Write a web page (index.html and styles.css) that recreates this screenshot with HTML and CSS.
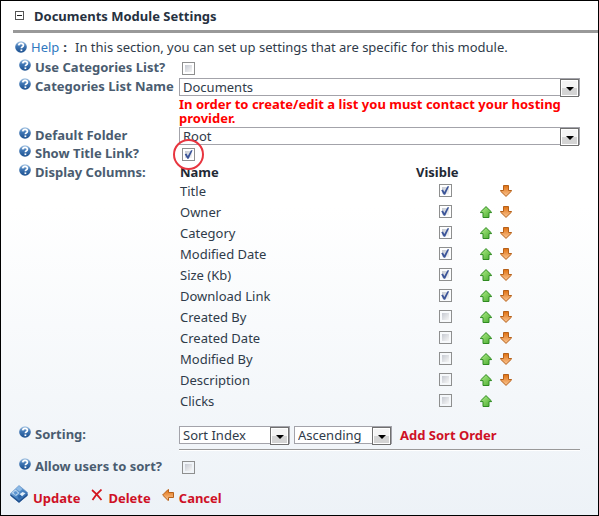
FILE: index.html
```html
<!DOCTYPE html>
<html lang="en">
<head>
<meta charset="utf-8">
<title>Documents Module Settings</title>
<link rel="stylesheet" href="styles.css">
</head>
<body>
<svg class="sprite" aria-hidden="true">
  <defs>
    <linearGradient id="blue" x1="0" y1="0" x2="0" y2="1"><stop offset="0" stop-color="#a9c8e6"/><stop offset=".45" stop-color="#3f76b4"/><stop offset="1" stop-color="#1b4f8e"/></linearGradient>
    <linearGradient id="green" x1="0" y1="0" x2="1" y2="1"><stop offset="0" stop-color="#b4f08c"/><stop offset="1" stop-color="#45a92c"/></linearGradient>
    <linearGradient id="orange" x1="0" y1="0" x2="0" y2="1"><stop offset="0" stop-color="#e0700f"/><stop offset="1" stop-color="#fbc897"/></linearGradient>
    <linearGradient id="disk" x1="0" y1="0" x2="1" y2="1"><stop offset="0" stop-color="#9cc4ea"/><stop offset=".5" stop-color="#4b86c4"/><stop offset="1" stop-color="#21569a"/></linearGradient>
    <symbol id="help" viewBox="0 0 12 12"><circle cx="6" cy="6" r="5.8" fill="url(#blue)"/><path d="M3.700 4.400Q4 2.400 6.100 2.400T8.400 4.200Q8.400 5.300 7.200 5.900Q6.400 6.300 6.400 7.300" fill="none" stroke="#fff" stroke-width="1.700"/><path d="M5.500 8.400h1.800v1.700H5.500z" fill="#fff"/></symbol>
    <symbol id="up" viewBox="0 0 12 12"><path d="M6 .6 11.500 6v.6H9v4.900H3V6.600H.5V6z" fill="url(#green)" stroke="#2f8a22"/></symbol>
    <symbol id="down" viewBox="0 0 12 12"><path d="M3.500.5h5v5h3v.6L6 11.400.5 6.100v-.6h3z" fill="url(#orange)" stroke="#b5601a"/></symbol>
    <symbol id="back" viewBox="0 0 12 12"><path d="M.6 6 6 .6h.5V3.500h5v5h-5v2.900H6z" fill="url(#orange)" stroke="#b5601a"/></symbol>
    <symbol id="cross" viewBox="0 0 12 12"><path d="M1 1Q6 5 10.500 11M10.500.5Q5 5 1.500 11" fill="none" stroke="#d3151e" stroke-width="1.700"/></symbol>
    <symbol id="save" viewBox="0 0 18 18"><path d="M9 .5 17.500 7.500v2.500L9 17.500.5 10.500V8.500z" fill="url(#disk)" stroke="#6f9acb" stroke-width=".7"/><path d="M.5 9 9 16l8.500-7v1.700L9 17.700.5 10.700z" fill="#1f4f8c"/><path d="M9 1 12.500 4 9.500 6.500 6 3.700z" fill="#8dbae6"/><path d="M5.500 4.500 9.500 8 6 11 1.500 7.800z" fill="#b9d4ee"/><path d="m3.500 7 2.500-1 2 2.200-3 1.800z" fill="#5a93cf"/><path d="m12.500 7 3 1.300-3.500 3L9.500 9.200z" fill="#e2effa"/><path d="m7.500 11 2.500-1.500 2 2L9 14z" fill="#2d66a8"/></symbol>
  </defs>
</svg>
<main class="panel">
  <header class="title">
    <button class="toggle" type="button" aria-label="Collapse"></button>
    <h1>Documents Module Settings</h1>
  </header>
  <form>
    <p class="intro"><svg class="icon"><use href="#help"/></svg><a href="#">Help</a><b>:</b><span>In this section, you can set up settings that are specific for this module.</span></p>

    <div class="row">
      <div class="label"><svg class="icon"><use href="#help"/></svg><label for="use-list">Use Categories List?</label></div>
      <div class="field indent"><input type="checkbox" id="use-list"></div>
    </div>
    <div class="row">
      <div class="label"><svg class="icon"><use href="#help"/></svg><label for="list-name">Categories List Name</label></div>
      <div class="field">
        <span class="select"><select id="list-name"><option>Documents</option></select></span>
        <p class="warning">In order to create/edit a list you must contact your hosting provider.</p>
      </div>
    </div>
    <div class="row">
      <div class="label"><svg class="icon"><use href="#help"/></svg><label for="folder">Default Folder</label></div>
      <div class="field"><span class="select"><select id="folder"><option>Root</option></select></span></div>
    </div>
    <div class="row">
      <div class="label"><svg class="icon"><use href="#help"/></svg><label for="title-link">Show Title Link?</label></div>
      <div class="field indent"><span class="ringed"><input type="checkbox" id="title-link" checked></span></div>
    </div>
    <div class="row">
      <div class="label"><svg class="icon"><use href="#help"/></svg><span id="columns-label">Display Columns:</span></div>
      <div class="field">
        <table aria-labelledby="columns-label">
          <colgroup><col class="c-name"><col class="c-visible"><col class="c-up"><col class="c-down"></colgroup>
          <thead><tr><th>Name</th><th>Visible</th><td></td><td></td></tr></thead>
          <tbody>
            <tr><td>Title</td><td><input type="checkbox" aria-label="Title" checked></td><td></td><td><button type="button" aria-label="Move down"><svg class="icon"><use href="#down"/></svg></button></td></tr>
            <tr><td>Owner</td><td><input type="checkbox" aria-label="Owner" checked></td><td><button type="button" aria-label="Move up"><svg class="icon"><use href="#up"/></svg></button></td><td><button type="button" aria-label="Move down"><svg class="icon"><use href="#down"/></svg></button></td></tr>
            <tr><td>Category</td><td><input type="checkbox" aria-label="Category" checked></td><td><button type="button" aria-label="Move up"><svg class="icon"><use href="#up"/></svg></button></td><td><button type="button" aria-label="Move down"><svg class="icon"><use href="#down"/></svg></button></td></tr>
            <tr><td>Modified Date</td><td><input type="checkbox" aria-label="Modified Date" checked></td><td><button type="button" aria-label="Move up"><svg class="icon"><use href="#up"/></svg></button></td><td><button type="button" aria-label="Move down"><svg class="icon"><use href="#down"/></svg></button></td></tr>
            <tr><td>Size (Kb)</td><td><input type="checkbox" aria-label="Size (Kb)" checked></td><td><button type="button" aria-label="Move up"><svg class="icon"><use href="#up"/></svg></button></td><td><button type="button" aria-label="Move down"><svg class="icon"><use href="#down"/></svg></button></td></tr>
            <tr><td>Download Link</td><td><input type="checkbox" aria-label="Download Link" checked></td><td><button type="button" aria-label="Move up"><svg class="icon"><use href="#up"/></svg></button></td><td><button type="button" aria-label="Move down"><svg class="icon"><use href="#down"/></svg></button></td></tr>
            <tr><td>Created By</td><td><input type="checkbox" aria-label="Created By"></td><td><button type="button" aria-label="Move up"><svg class="icon"><use href="#up"/></svg></button></td><td><button type="button" aria-label="Move down"><svg class="icon"><use href="#down"/></svg></button></td></tr>
            <tr><td>Created Date</td><td><input type="checkbox" aria-label="Created Date"></td><td><button type="button" aria-label="Move up"><svg class="icon"><use href="#up"/></svg></button></td><td><button type="button" aria-label="Move down"><svg class="icon"><use href="#down"/></svg></button></td></tr>
            <tr><td>Modified By</td><td><input type="checkbox" aria-label="Modified By"></td><td><button type="button" aria-label="Move up"><svg class="icon"><use href="#up"/></svg></button></td><td><button type="button" aria-label="Move down"><svg class="icon"><use href="#down"/></svg></button></td></tr>
            <tr><td>Description</td><td><input type="checkbox" aria-label="Description"></td><td><button type="button" aria-label="Move up"><svg class="icon"><use href="#up"/></svg></button></td><td><button type="button" aria-label="Move down"><svg class="icon"><use href="#down"/></svg></button></td></tr>
            <tr><td>Clicks</td><td><input type="checkbox" aria-label="Clicks"></td><td><button type="button" aria-label="Move up"><svg class="icon"><use href="#up"/></svg></button></td><td></td></tr>
          </tbody>
        </table>
      </div>
    </div>
    <div class="row sorting">
      <div class="label"><svg class="icon"><use href="#help"/></svg><label for="sort-by">Sorting:</label></div>
      <div class="field">
        <div class="sort-line">
          <span class="select by"><select id="sort-by"><option>Sort Index</option></select></span>
          <span class="select order"><select aria-label="Sort direction"><option>Ascending</option></select></span>
          <a class="command" href="#">Add Sort Order</a>
        </div>
        <hr>
      </div>
    </div>
    <div class="row">
      <div class="label"><svg class="icon"><use href="#help"/></svg><label for="user-sort">Allow users to sort?</label></div>
      <div class="field indent"><input type="checkbox" id="user-sort"></div>
    </div>
    <footer class="actions">
      <a class="command" href="#"><svg class="save"><use href="#save"/></svg><span>Update</span></a>
      <a class="command" href="#"><svg class="icon"><use href="#cross"/></svg><span>Delete</span></a>
      <a class="command" href="#"><svg class="icon"><use href="#back"/></svg><span>Cancel</span></a>
    </footer>
  </form>
</main>
</body>
</html>
```
FILE: styles.css
```css
* { box-sizing: border-box; }

body {
  margin: 0;
  color: #2f3b4a;
  font: 13px/18px Tahoma, "Noto Sans", Verdana, sans-serif;
}

h1, p { margin: 0; }

.sprite { position: absolute; width: 0; height: 0; }

.panel {
  min-height: 100vh;
  border: 1px solid #000;
  background: linear-gradient(#fff 0, #fff 40%, #edf2f7 100%);
}

.icon { display: block; flex: none; width: 12px; height: 12px; }

.title {
  display: flex;
  align-items: center;
  gap: 10px;
  height: 32px;
  margin-left: 12px;
  padding-left: 2px;
  border-bottom: 3px solid #999;
}

h1 { color: #26313f; font-size: 13px; }

.toggle {
  width: 9px;
  height: 9px;
  padding: 0;
  border: 1px solid #555;
  background: linear-gradient(#222, #222) center / 5px 1px no-repeat #fff;
}

.intro {
  display: flex;
  align-items: center;
  height: 24px;
  margin-top: 2px;
  padding-left: 14px;
}
.intro a { margin: 0 4px; color: #2f78bf; text-decoration: none; }
.intro b { margin-right: 8px; }

.row {
  display: grid;
  grid-template-columns: 160px minmax(0, 1fr);
  padding: 0 18px;
}

.label {
  display: flex;
  gap: 4px;
  height: 18px;
  color: #4a5c70;
  font-weight: bold;
  line-height: 16px;
  white-space: nowrap;
}

.field { min-height: 18px; }
.indent { padding: 3px; }

.select { position: relative; display: block; height: 18px; }
.select select {
  appearance: none;
  display: block;
  width: 100%;
  height: 18px;
  padding: 0 20px 0 3px;
  border: 1px solid #a3a3aa;
  border-radius: 0;
  background: #fff;
  color: #2f3b4a;
  font: inherit;
  line-height: 16px;
}
.select::before {
  content: "";
  position: absolute;
  top: 1px;
  right: 1px;
  width: 17px;
  height: 16px;
  border: 1px solid #707070;
  background: linear-gradient(#f4f4f4 50%, #d4d4d4 50%);
  box-shadow: inset 0 0 0 1px #fff;
  pointer-events: none;
}
.select::after {
  content: "";
  position: absolute;
  top: 9px;
  right: 6px;
  border: solid transparent;
  border-width: 4px 4px 0;
  border-top-color: #000;
  pointer-events: none;
}

.warning {
  padding: 1px 0 2px;
  color: #f00;
  font-weight: bold;
  line-height: 14px;
}

input[type="checkbox"] {
  appearance: none;
  display: block;
  position: relative;
  width: 13px;
  height: 13px;
  margin: 0;
  border: 1px solid #8e8f8f;
  background: linear-gradient(135deg, #c6cad2, #f6f6f6) content-box #f4f4f4;
  padding: 2px;
}
input[type="checkbox"]:checked::after {
  content: "";
  position: absolute;
  inset: 1px;
  background: #3c5599;
  clip-path: polygon(8% 48%, 28% 40%, 42% 66%, 78% 4%, 96% 4%, 52% 98%, 36% 98%);
}

.ringed { position: relative; display: block; width: 13px; }
.ringed::before {
  content: "";
  position: absolute;
  z-index: 1;
  inset: -9px;
  border: 2px solid #e8353f;
  border-radius: 50%;
  pointer-events: none;
}

table { width: 100%; border-collapse: collapse; table-layout: fixed; }
.c-visible { width: 60px; }
.c-up { width: 24px; }
.c-down { width: 81px; }
th, td { height: 21px; padding: 0 1px; text-align: left; }
td:nth-child(3) { padding-left: 5px; }
th { color: #1f2935; }
thead th, thead td { height: 16px; line-height: 16px; }
td input[type="checkbox"] { margin: 0 auto; }
td button { display: block; padding: 0; border: 0; background: none; }

.sorting { margin-top: 15px; }
.sort-line { display: flex; gap: 4px; height: 18px; }
.by { width: 111px; }
.order { width: 98px; }
.command { color: #ce1126; font-weight: bold; text-decoration: none; }
.sort-line .command { margin-left: 4px; }
hr { margin: 5px 0 7px; border: 0; border-top: 1px solid #999; border-bottom: 1px solid #fff; }

.actions { display: flex; gap: 11px; padding: 8px 9px; }
.actions .command { display: flex; align-items: flex-start; gap: 5px; }
.actions span { padding-top: 4px; }
.actions .icon { margin-top: 4px; }
.save { width: 18px; height: 18px; }
```
